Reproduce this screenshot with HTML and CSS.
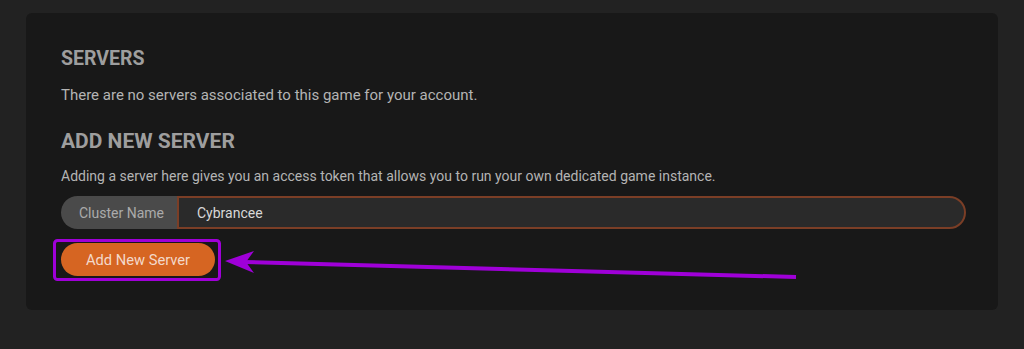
FILE: index.html
```html
<!DOCTYPE html>
<html lang="en">
<head>
    <meta charset="UTF-8">
    <meta name="viewport" content="width=device-width, initial-scale=1.0">
    <title>Servers</title>
    <link rel="stylesheet" href="styles.css">
</head>
<body>

    <div class="panel">
        <h2 class="panel-title">SERVERS</h2>
        <p class="panel-text big">There are no servers associated to this game for your account.</p>

        <h2 class="panel-title second">ADD NEW SERVER</h2>
        <p class="panel-text">Adding a server here gives you an access token that allows you to run your own dedicated game instance.</p>

        <div class="input-group">
            <span class="input-label">Cluster Name</span>
            <input class="input-field" type="text" value="Cybrancee">
        </div>

        <button class="add-button">Add New Server</button>
    </div>

    <!-- marca de la captura -->
    <svg class="annotation" width="1024" height="349" viewBox="0 0 1024 349">
        <rect x="54.5" y="240.5" width="165" height="39" rx="3" fill="none" stroke="#9f00d8" stroke-width="3"/>
        <line x1="796" y1="277" x2="244" y2="262" stroke="#9f00d8" stroke-width="4"/>
        <polygon points="225,261 254,251 246,262 254,273" fill="#9f00d8"/>
    </svg>

</body>
</html>
```

FILE: styles.css
```css
/* pagina */

body {
  margin: 0;
  background-color: #222222;
  font-family: Roboto, "Liberation Sans", sans-serif;
  width: 1024px;
  height: 349px;
  overflow: hidden;
  position: relative;
}
.panel {
  margin: 13px 0 0 26px;
  width: 972px;
  height: 297px;
  box-sizing: border-box;
  padding: 34px 32px 0 35px;
  background-color: #181818;
  border-radius: 6px;
}
.panel-title {
  margin: 0;
  font-size: 19.5px;
  line-height: 24px;
  font-weight: 700;
  color: #9e9e9e;
}
.panel-title.second {
  margin-top: 24px;
  font-size: 21px;
}
.panel-text {
  margin: 14px 0 0 0;
  font-size: 14px;
  line-height: 20px;
  color: #b4b4b4;
}
.panel-text.big {
  font-size: 15px;
}
.panel-title.second + .panel-text {
  margin-top: 13px;
}

/* campo */

.input-group {
  display: flex;
  margin-top: 10px;
  height: 33px;
}
.input-label {
  display: flex;
  align-items: center;
  padding: 0 0 0 18px;
  width: 116px;
  box-sizing: border-box;
  white-space: nowrap;
  background-color: #4a4a4a;
  color: #ababab;
  font-size: 14px;
  border-radius: 17px 0 0 17px;
}
.input-field {
  flex: 1;
  margin: 0;
  height: 33px;
  box-sizing: border-box;
  padding: 0 18px;
  background-color: #2a2a2a;
  border: 2px solid #7b3e26;
  border-radius: 0 17px 17px 0;
  color: #d8d8d8;
  font-family: Roboto, "Liberation Sans", sans-serif;
  font-size: 14px;
  outline: none;
}

/* boton */

.add-button {
  display: block;
  margin-top: 14px;
  width: 154px;
  height: 33px;
  border: none;
  border-radius: 17px;
  background-color: #d66522;
  color: #f3d9cb;
  font-family: Roboto, "Liberation Sans", sans-serif;
  font-size: 14.7px;
  cursor: pointer;
}

.annotation {
  position: absolute;
  top: 0;
  left: 0;
  pointer-events: none;
}
```
